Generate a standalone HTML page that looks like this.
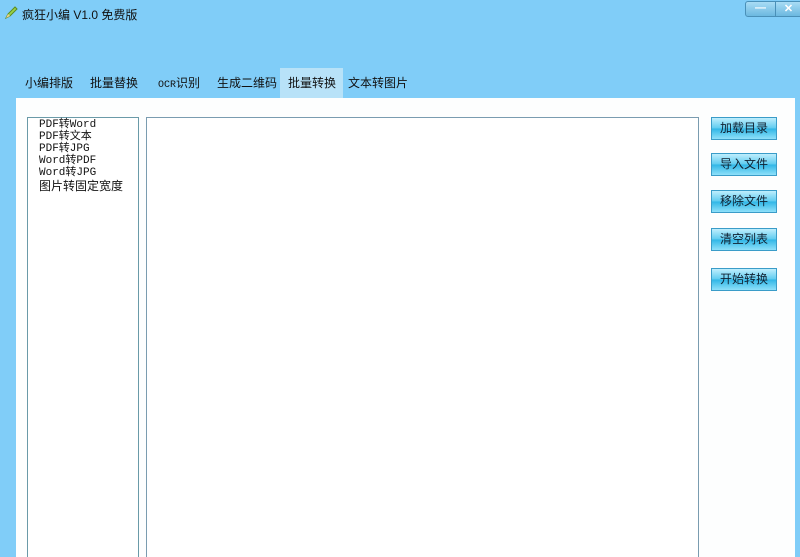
<!DOCTYPE html>
<html style="overflow:hidden"><head><meta charset="utf-8"><style>
html,body{margin:0;width:800px;height:557px;overflow:hidden}
body{background:#80cdf8;position:relative;font-family:"Liberation Sans","Noto Sans CJK SC",sans-serif;font-size:12px;color:#111}
.a{position:absolute}
.tab{position:absolute;top:74px;font-size:12px}
.btn{position:absolute;left:711px;width:64px;height:21px;border:1px solid #3a9cc8;background:linear-gradient(#bfeefd,#5ccbf0 50%,#2fb6e6 51%,#8ee0fa);text-align:center;line-height:21px;font-size:12px;color:#102030}
.list div{height:12px;line-height:12px;font-family:"Liberation Mono","Noto Sans CJK SC",monospace;font-size:11px}
</style></head><body>
<div class="a" style="left:4px;top:6px;width:12px;height:12px;"><svg width="14" height="14"><path d="M2 12L4 8L11 1L13 3L6 10Z" fill="#9ad24a" stroke="#5a8a20"/><path d="M2 12L4 8L6 10Z" fill="#f0d090"/></svg></div>
<div class="a" style="left:22px;top:6px;font-size:12px">疯狂小编 V1.0 免费版</div>
<div class="a" style="left:745px;top:1px;width:29px;height:14px;border:1px solid #4a90b8;border-radius:3px 0 0 3px;background:linear-gradient(#a8dcf5,#6cb8e0);color:#fff;text-align:center;font-size:11px;line-height:12px;font-weight:bold">—</div>
<div class="a" style="left:775px;top:1px;width:25px;height:14px;border:1px solid #4a90b8;background:linear-gradient(#a8dcf5,#6cb8e0);color:#fff;text-align:center;font-size:11px;line-height:14px;font-weight:bold">✕</div>
<div class="a" style="left:280px;top:68px;width:63px;height:30px;background:#b8e2f8"></div>
<div class="tab" style="left:25px">小编排版</div>
<div class="tab" style="left:90px">批量替换</div>
<div class="tab" style="left:158px"><span style="font-family:'Liberation Mono';font-size:10px">OCR</span>识别</div>
<div class="tab" style="left:217px">生成二维码</div>
<div class="tab" style="left:288px">批量转换</div>
<div class="tab" style="left:348px">文本转图片</div>
<div class="a" style="left:16px;top:98px;width:779px;height:459px;background:#fdfefe"></div>
<div class="a list" style="left:27px;top:117px;width:112px;height:445px;border:1px solid #6a9aa8;background:#fff;padding-left:11px;box-sizing:border-box;padding-top:1px">
<div>PDF转Word</div><div>PDF转文本</div><div>PDF转JPG</div><div>Word转PDF</div><div>Word转JPG</div><div style="font-family:'Noto Sans CJK SC';font-size:12px;line-height:14px">图片转固定宽度</div></div>
<div class="a" style="left:146px;top:117px;width:551px;height:445px;border:1px solid #7a9cb0;background:#fff"></div>
<div class="btn" style="top:117px">加载目录</div>
<div class="btn" style="top:153px">导入文件</div>
<div class="btn" style="top:190px">移除文件</div>
<div class="btn" style="top:228px">清空列表</div>
<div class="btn" style="top:268px">开始转换</div>
</body></html>
